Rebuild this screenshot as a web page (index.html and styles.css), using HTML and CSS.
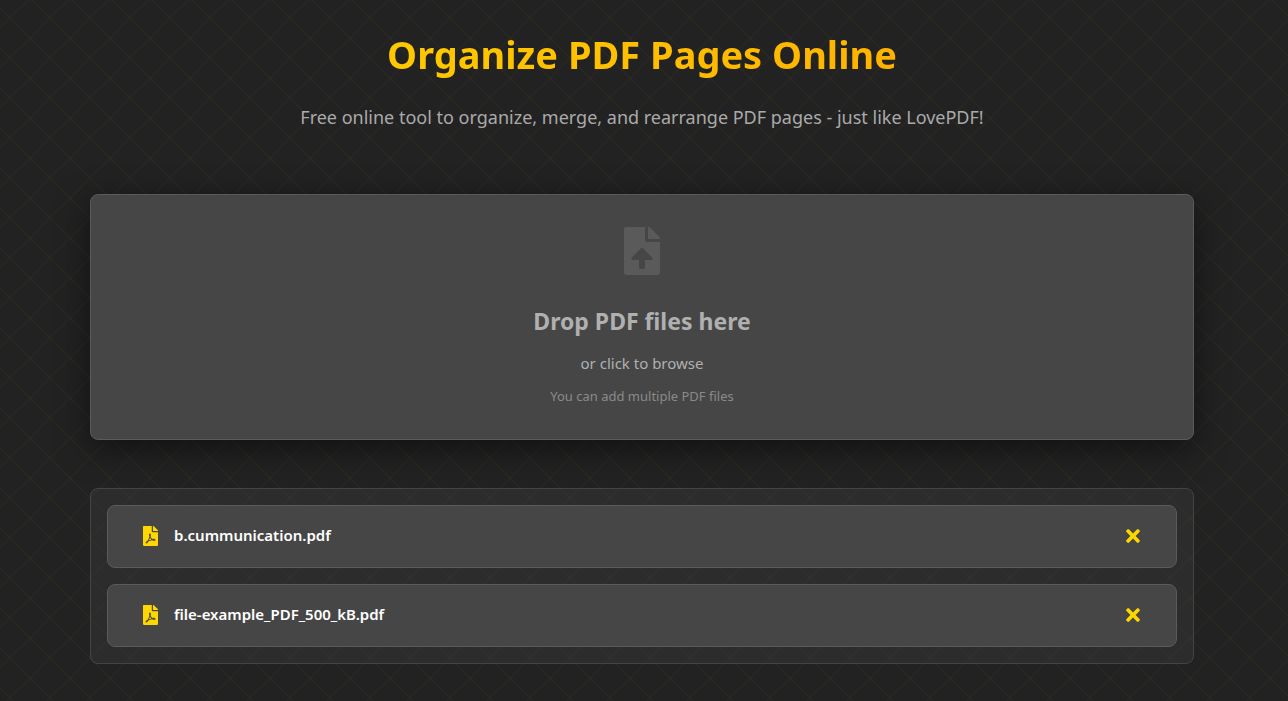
FILE: index.html
```html
<!DOCTYPE html>
<html lang="en">

<head>
    <meta charset="UTF-8">
    <meta name="viewport" content="width=device-width, initial-scale=1.0">
    <title>Organize PDF Pages Online</title>
    <link rel="stylesheet" href="styles.css">
</head>

<body>
    <div class="container">
        <header>
            <h1>Organize PDF Pages Online</h1>
            <p class="subtitle">Free online tool to organize, merge, and rearrange PDF pages - just like LovePDF!</p>
        </header>

        <label class="drop-area" for="fileInput">
            <svg class="upload-icon" viewBox="0 0 384 512" aria-hidden="true">
                <path d="M224 136V0H24C10.7 0 0 10.7 0 24v464c0 13.3 10.7 24 24 24h336c13.3 0 24-10.7 24-24V160H248c-13.2 0-24-10.8-24-24zm65.18 216.01H224v80c0 8.84-7.16 16-16 16h-32c-8.84 0-16-7.16-16-16v-80H94.82c-14.28 0-21.41-17.29-11.27-27.36l96.42-95.7c6.65-6.61 17.39-6.61 24.04 0l96.42 95.7c10.15 10.07 3.03 27.36-11.25 27.36zM377 105L279.1 7c-4.5-4.5-10.6-7-17-7H256v128h128v-6.1c0-6.3-2.5-12.4-7-16.9z"/>
            </svg>
            <span class="drop-title">Drop PDF files here</span>
            <span class="drop-text">or click to browse</span>
            <span class="drop-hint">You can add multiple PDF files</span>
            <input type="file" id="fileInput" accept="application/pdf" multiple>
        </label>

        <ul class="file-list">
            <li class="file-item">
                <svg class="file-icon" viewBox="0 0 384 512" aria-hidden="true">
                    <path id="pdf" d="M181.9 256.1c-5-16-4.9-46.9-2-46.9 8.4 0 7.6 36.9 2 46.9zm-1.7 47.2c-7.7 20.2-17.3 43.3-28.4 62.7 18.3-7 39-17.2 62.9-21.9-12.7-9.6-24.9-23.4-34.5-40.8zM86.1 428.1c0 .8 13.2-5.4 34.9-40.2-6.7 6.3-29.1 24.5-34.9 40.2zM248 160h136v328c0 13.3-10.7 24-24 24H24c-13.3 0-24-10.7-24-24V24C0 10.7 10.7 0 24 0h200v136c0 13.2 10.8 24 24 24zm-8 171.8c-20-12.2-33.3-29-42.7-53.8 4.5-18.5 11.6-46.6 6.2-64.2-4.7-29.4-42.4-26.5-47.8-6.8-5 18.3-.4 44.1 8.1 77-11.6 27.6-28.7 64.6-40.8 85.8-.1 0-.1.1-.2.1-27.1 13.9-73.6 44.5-54.5 68 5.6 6.9 16 10 21.5 10 17.9 0 35.7-18 61.1-61.8 25.8-8.5 54.1-19.1 79-23.2 21.7 11.8 47.1 19.5 64 19.5 29.2 0 31.2-32 19.7-43.4-13.9-13.6-54.3-9.7-73.6-7.2zM377 105L279 7c-4.5-4.5-10.6-7-17-7h-6v128h128v-6.1c0-6.3-2.5-12.4-7-16.9zm-74.1 255.3c4.1-2.7-2.5-11.9-42.8-9 37.1 15.8 42.8 9 42.8 9z"/>
                </svg>
                <span class="file-name">b.cummunication.pdf</span>
                <button type="button" class="remove-btn" aria-label="Remove b.cummunication.pdf">
                    <svg viewBox="0 0 352 512" aria-hidden="true">
                        <path id="times" d="M242.72 256l100.07-100.07c12.28-12.28 12.28-32.19 0-44.48l-22.24-22.24c-12.28-12.28-32.19-12.28-44.48 0L176 189.28 75.93 89.21c-12.28-12.28-32.19-12.28-44.48 0L9.21 111.45c-12.28 12.28-12.28 32.19 0 44.48L109.28 256 9.21 356.07c-12.28 12.28-12.28 32.19 0 44.48l22.24 22.24c12.28 12.28 32.2 12.28 44.48 0L176 322.72l100.07 100.07c12.28 12.28 32.2 12.28 44.48 0l22.24-22.24c12.28-12.28 12.28-32.19 0-44.48L242.72 256z"/>
                    </svg>
                </button>
            </li>
            <li class="file-item">
                <svg class="file-icon" viewBox="0 0 384 512" aria-hidden="true">
                    <use href="#pdf"/>
                </svg>
                <span class="file-name">file-example_PDF_500_kB.pdf</span>
                <button type="button" class="remove-btn" aria-label="Remove file-example_PDF_500_kB.pdf">
                    <svg viewBox="0 0 352 512" aria-hidden="true">
                        <use href="#times"/>
                    </svg>
                </button>
            </li>
        </ul>
    </div>
</body>

</html>
```

FILE: styles.css
```css
* {
    box-sizing: border-box;
    margin: 0;
    padding: 0;
}

body {
    min-height: 100vh;
    padding: 24px 94px 36px 90px;
    font-family: "Segoe UI", "Noto Sans", "Open Sans", sans-serif;
    color: #fff;
    background-color: #222;
    background-image:
        linear-gradient(45deg, transparent 48%, rgba(255, 215, 0, 0.03) 50%, transparent 52%),
        linear-gradient(-45deg, transparent 48%, rgba(255, 215, 0, 0.03) 50%, transparent 52%);
    background-size: 40px 40px;
    background-position: 10px 18px;
}

.container {
    max-width: 1200px;
    margin: 0 auto;
}

header {
    text-align: center;
    margin-bottom: 62px;
}

h1 {
    margin-bottom: 18px;
    font-size: 38px;
    line-height: 60px;
    font-weight: 700;
    background: linear-gradient(135deg, #ffd700, #ffa500);
    -webkit-background-clip: text;
    background-clip: text;
    color: transparent;
}

.subtitle {
    font-size: 18px;
    line-height: 30px;
    color: #aaa;
}

.drop-area {
    display: flex;
    flex-direction: column;
    align-items: center;
    padding: 32px;
    margin-bottom: 48px;
    background: #464646;
    border: 1px solid #5a5a5a;
    border-radius: 8px;
    box-shadow: 0 8px 32px rgba(0, 0, 0, 0.5);
    cursor: pointer;
}

.drop-area input {
    position: absolute;
    width: 1px;
    height: 1px;
    opacity: 0;
}

.upload-icon {
    width: 36px;
    height: 48px;
    margin-bottom: 24px;
    fill: #5a5a5a;
}

.drop-title {
    margin-bottom: 8px;
    font-size: 23px;
    line-height: 44px;
    font-weight: 700;
    color: #b0b0b0;
}

.drop-text {
    margin-bottom: 10px;
    font-size: 15px;
    line-height: 24px;
    color: #b0b0b0;
}

.drop-hint {
    font-size: 13px;
    line-height: 22px;
    color: #8a8a8a;
}

.file-list {
    display: flex;
    flex-direction: column;
    gap: 16px;
    padding: 16px;
    list-style: none;
    background: rgba(70, 70, 70, 0.3);
    border: 1px solid #444;
    border-radius: 8px;
}

.file-item {
    display: flex;
    align-items: center;
    gap: 16px;
    padding: 18px 36px 19px 35px;
    background: #464646;
    border: 1px solid #5a5a5a;
    border-radius: 8px;
}

.file-icon {
    width: 15px;
    height: 20px;
    fill: #ffd700;
}

.file-name {
    flex: 1;
    padding-bottom: 2px;
    font-size: 15px;
    line-height: 22px;
    font-weight: 600;
}

.remove-btn {
    display: flex;
    border: none;
    background: none;
    cursor: pointer;
}

.remove-btn svg {
    width: 14px;
    height: 20px;
    fill: #ffd700;
}
```
